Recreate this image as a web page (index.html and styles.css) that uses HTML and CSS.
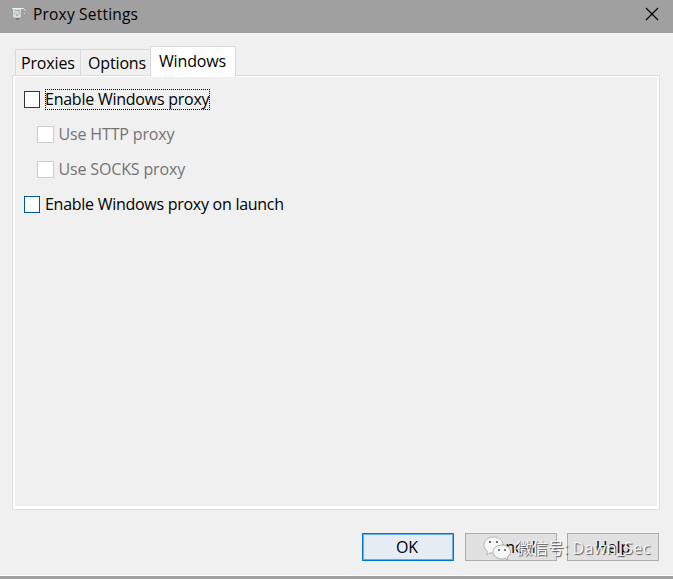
FILE: index.html
```html
<!DOCTYPE html>
<html lang="en">
<head>
<meta charset="utf-8">
<title>Proxy Settings</title>
<link rel="stylesheet" href="styles.css">
</head>
<body>
<div class="window">
  <header class="titlebar">
    <svg class="app-icon" width="16" height="16" viewBox="0 0 16 16">
      <path d="M2 2h8v8l-2 1H4l-2-1z" fill="#d3d9d9"/>
      <path d="M1 1.500h11" stroke="#f2f2f2"/>
      <path d="M11 1.500h2M13 2.500h1M14 3.500h1M13 6.500h1" stroke="#dedede"/>
      <path d="M4 3.500h5" stroke="#a9aead"/>
      <path d="M3 5h2v2H3z" fill="#a4e2d4"/><path d="M7 4h2v2H7z" fill="#e6b6a5"/>
      <path d="M5 7h2v2H5z" fill="#88bddd"/><path d="M8 6h2v2H8z" fill="#dfb0cf"/>
      <path d="M3 8h2v2H3z" fill="#c8e7b9"/><path d="M4 11h5l-2 2H6z" fill="#6e6e6e"/>
    </svg>
    <h1 class="title">Proxy Settings</h1>
    <svg class="close" width="14" height="14" viewBox="0 0 14 14"><path d="M1 1l12 12M13 1L1 13" stroke="#000" stroke-width="1.15"/></svg>
  </header>
  <main class="content">
    <nav class="tabs">
      <div class="tab tab-proxies"><span>Proxies</span></div>
      <div class="tab tab-options"><span>Options</span></div>
      <div class="tab active"><span>Windows</span></div>
    </nav>
    <section class="panel">
      <div class="option"><i class="box dark"></i><span class="focused">Enable Windows proxy</span></div>
      <div class="option disabled"><i class="box"></i><span>Use HTTP proxy</span></div>
      <div class="option disabled"><i class="box"></i><span>Use SOCKS proxy</span></div>
      <div class="option"><i class="box blue"></i><span class="launch">Enable Windows proxy on launch</span></div>
    </section>
    <footer class="actions">
      <div class="button primary">OK</div>
      <div class="button cancel">Cancel</div>
      <div class="button">Help</div>
      <div class="watermark">
        <svg width="29" height="25" viewBox="0 0 29 25">
          <path d="M10.500 1C5 1 1 4.500 1 9c0 2.700 1.400 4.800 3.500 6.200L3.500 19l4-2.200c5.500 1.500 12.500-1.800 12.500-7.800 0-4.500-4-8-9.500-8z" fill="#f7f7f7" stroke="#aaa" stroke-width=".8"/>
          <circle cx="7" cy="6" r="1.100" fill="#444"/><circle cx="14" cy="6" r="1.100" fill="#444"/>
          <path d="M19 9c-5 0-9 3-9 7s4 7 9 7c1 0 2-.1 3-.5l3 1.500-.8-3c2-1.200 3.300-3 3.300-5 0-4-3.500-7-8.500-7z" fill="#f7f7f7" stroke="#999" stroke-width=".8"/>
          <circle cx="16" cy="14" r="1" fill="#555"/><circle cx="22" cy="14" r="1" fill="#555"/>
        </svg>
        <span>微信号: <span class="account">Dawn_Sec</span></span>
      </div>
    </footer>
  </main>
</div>
</body>
</html>
```
FILE: styles.css
```css
* { box-sizing: border-box; }
body {
  margin: 0;
  font: 16px/20px "Open Sans", "Noto Sans CJK SC", sans-serif;
  color: #000;
}
.window {
  display: flex;
  flex-direction: column;
  height: 579px;
  background: #f0f0f0;
  border-bottom: 3px solid #a0a0a0;
  overflow: hidden;
}
.titlebar {
  display: flex;
  align-items: flex-start;
  flex: none;
  height: 33px;
  padding: 5px 14px 0 11px;
  background: #a0a0a0;
}
.app-icon { margin: 2px 6px 0 0; }
.title { margin: -1px 0 0; font-size: 15.500px; font-weight: 400; letter-spacing: .2px; }
.close { margin: 2px 0 0 auto; }
.content {
  display: flex;
  flex-direction: column;
  flex: 1;
  padding: 13px 13px 14px 12px;
  border-bottom: 1px solid #fff;
}
.tabs {
  display: flex;
  align-items: flex-end;
  height: 30px;
  padding-left: 3px;
  z-index: 1;
}
.tab {
  height: 27px;
  padding: 3px 0 0 5px;
  border: 1px solid #d9d9d9;
  border-width: 1px 0 0 1px;
  white-space: nowrap;
  letter-spacing: -.15px;
}
.tab-proxies { width: 65px; }
.tab-options { width: 70px; padding-left: 7px; }
.tab.active {
  width: 86px;
  height: 31px;
  margin-bottom: -1px;
  padding: 4px 0 0 8px;
  border-width: 1px 1px 0;
  background: #fff;
}
.panel {
  width: 648px;
  height: 435px;
  margin-top: -1px;
  padding: 11px 0 0 9px;
  border: 1px solid #dcdcdc;
  box-shadow: inset 2px 1px #fff, inset -2px -3px #fff;
}
.option {
  display: flex;
  align-items: center;
  height: 25px;
  margin-bottom: 10px;
  padding-left: 2px;
  letter-spacing: -.15px;
}
.option.disabled { padding-left: 15px; color: #747474; }
.disabled span, .launch { margin-top: -2px; }
.launch { letter-spacing: -.27px; }
.box {
  width: 16px;
  height: 17px;
  margin-right: 5px;
  border: 1px solid #ccc;
  background: #fff;
}
.disabled .box { width: 17px; }
.box.dark { border-color: #333; }
.box.blue { border-color: #00599c; }
.focused {
  width: 165px;
  height: 21px;
  outline: 1px dotted #000;
  outline-offset: -1px;
  letter-spacing: -.24px;
  white-space: nowrap;
}
.disabled .box { margin-right: 4.500px; }
.actions {
  display: flex;
  justify-content: flex-end;
  gap: 10px;
  margin: 23px 1px 0 0;
  position: relative;
}
.button {
  width: 92px;
  height: 28px;
  border: 1px solid #adadad;
  background: #e1e1e1;
  line-height: 27px;
  text-align: center;
}
.button.primary {
  margin-right: 1px;
  padding-right: 2px;
  border-color: #0078d7;
  background: #e5ecf4;
  box-shadow: inset 0 0 0 1px #65aee8;
}
.watermark {
  position: absolute;
  left: 471px;
  top: 3px;
  display: flex;
  align-items: flex-start;
  color: #f8f8f8;
  line-height: 25px;
  text-shadow: 1px 1px 1px #555;
  white-space: nowrap;
}
.watermark > span { margin-left: 4px; }
.account { letter-spacing: .4px; }
```
